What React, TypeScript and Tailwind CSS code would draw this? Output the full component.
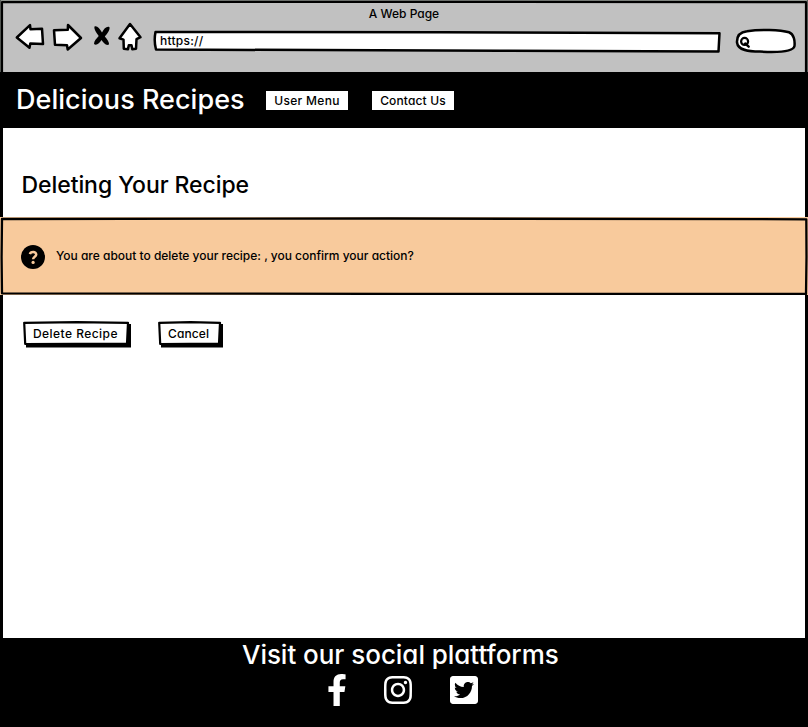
import React from "react";
import { FaFacebookF, FaInstagram, FaTwitterSquare } from "react-icons/fa";

function BrowserBar() {
  return (
    <header className="relative h-[72px] w-full shrink-0 bg-[#c1c1c1]">
      <svg className="absolute inset-0" width="808" height="72" viewBox="0 0 808 72" fill="none" stroke="#000" strokeWidth="2.5" strokeLinejoin="round" strokeLinecap="round">
        <path d="M0 0H808" stroke="#7d837d" strokeWidth="1.6" />
        <path d="M0 0V72M808 0V72" stroke="#5a5e5a" strokeWidth="2" />
        <path d="M2 72V2.2L400 1.8L806 2.2V72" strokeWidth="2.2" />
        <g fill="#fff">
          <path d="M16.8 37.5L30 25.2L30.5 29.3L42 28.7L43 44L30.3 43.6L29.5 47.8Z" />
          <path d="M54 30.2L67.8 29.8L68 25L81 38L67.7 49.5L67 45.2L55 44.8Z" />
          <path d="M130 24L140.5 37.2L136.5 39.2L136 48.8L132.3 49.2L131.5 45.3H128.8L128 49.2L123.8 48.7L123.5 39.6L119.5 38.3Z" />
          <path d="M155.5 32L440 32.2L719.5 33.2L718.5 51.5L500 50.8L156 49.5C154.5 44 154.3 38 155.5 32Z" />
          <path d="M747 31.2C760 29.2 780 29.5 789 32.3C794 34 795 41 794.5 46C793 52.8 772 52.3 760 51.6C749 51.6 738 50.5 737 42.5C736.7 36 740 32 747 31.2Z" />
        </g>
        <g fill="#000" stroke="none">
          <path d="M94.5 26.5C97 25.5 99.5 28 102 32.5C104 28.5 107 25.8 109.5 27.2C110.2 30 107 34 104.8 36.4C107.5 39.5 109.5 42.5 109 44.5C106 46 103.5 43 101.5 40C99.5 43 96.5 46 94 44C94 41 96.5 38.5 98.7 36C96 32 93.8 29 94.5 26.5Z" />
        </g>
        <circle cx="744.6" cy="41.4" r="3.5" strokeWidth="2.2" />
        <path d="M745.2 43.5L748.7 46.7" strokeWidth="2.4" />
      </svg>
      <div className="relative flex h-7 justify-center pt-[5px] text-[12px] font-medium leading-[18px]">
        <span>A Web Page</span>
      </div>
      <div className="relative pl-[160px] pt-[4px] text-[12px] font-medium leading-[18px] tracking-[0.25px]">https://</div>
    </header>
  );
}

function NavButton({ children, className }: { children: React.ReactNode; className: string }) {
  return (
    <button className={`h-[19px] w-[82px] bg-white text-[12px] font-medium leading-[19px] whitespace-nowrap text-black ${className}`}>{children}</button>
  );
}

function SketchButton({ children, width, className }: { children: React.ReactNode; width: number; className: string }) {
  return (
    <button className="relative h-[27px] whitespace-nowrap text-[12px] font-medium" style={{ width }}>
      <svg className="absolute inset-0" width={width} height="27" strokeLinejoin="round">
        <path d={`M3 23V26.5H${width}V3H${width - 4}Z`} />
        <path d={`M1.2 1.8L${width / 2} 1.2L${width - 3} 1.8L${width - 4} 22.6L2.2 23Z`} fill="#fff" stroke="#000" strokeWidth="2.2" />
      </svg>
      <span className={`relative block pb-[2px] pl-[10px] text-left leading-[24px] ${className}`}>{children}</span>
    </button>
  );
}

export default function App() {
  return (
    <div className="flex h-[727px] w-[808px] flex-col overflow-hidden bg-white font-[Inter,sans-serif] text-black [font-feature-settings:'cv11','calt'_0,'liga'_0]">
      <BrowserBar />
      <nav className="flex h-14 shrink-0 items-center bg-black">
        <h1 className="ml-[16px] w-[250px] whitespace-nowrap text-[27px] leading-[54px] font-medium tracking-[0.03px] text-white">Delicious Recipes</h1>
        <NavButton className="tracking-[0.3px]">User Menu</NavButton>
        <NavButton className="ml-6 tracking-[0.15px]">Contact Us</NavButton>
      </nav>
      <main className="flex grow flex-col">
        <section className="h-[89px] shrink-0 border-x-3 border-black pl-[18.5px] pt-[41px]">
          <h2 className="whitespace-nowrap text-[23px] leading-8 font-medium tracking-[-0.07px]">Deleting Your Recipe</h2>
        </section>
        <section className="relative flex h-[78px] shrink-0 items-center bg-[#f8ca9c] pl-[21px]">
          <svg className="absolute inset-0" width="808" height="78" fill="none" stroke="#000" strokeWidth="2.3" strokeLinejoin="round">
            <path d="M2 2L390 1.5L806.3 2.3L806.5 40L806 77L400 76.9L2 76.3L1.6 40Z" />
          </svg>
          <svg className="relative top-px" width="24" height="24" viewBox="0 0 24 24">
            <circle cx="12" cy="12" r="12" />
            <path d="M8.9 9.1C9.5 6.5 15.4 6.2 15.2 9.6C15.1 11.9 12.2 11.7 12.1 14.3" fill="none" stroke="#f8ca9c" strokeWidth="2.5" />
            <circle cx="12.1" cy="17.4" r="1.6" fill="#f8ca9c" />
          </svg>
          <p className="relative ml-[11px] whitespace-nowrap text-[12px] font-medium tracking-[-0.01px]">You are about to delete your recipe: , you confirm your action?</p>
        </section>
        <section className="grow border-x-3 border-black pl-5 pt-[26px]">
          <div className="flex gap-[27px]">
            <SketchButton width={108} className="tracking-[0.45px]">Delete Recipe</SketchButton>
            <SketchButton width={65} className="tracking-[0.1px]">Cancel</SketchButton>
          </div>
        </section>
      </main>
      <footer className="h-[89px] shrink-0 bg-black text-white">
        <p className="pl-[242px] whitespace-nowrap text-[26px] leading-[34px] font-medium tracking-[-0.04px]">Visit our social plattforms</p>
        <div className="flex pl-[321px] pt-[2px]">
          <FaFacebookF size={32} />
          <FaInstagram size={32} className="ml-[29px]" />
          <FaTwitterSquare size={32} className="ml-[34px]" />
        </div>
      </footer>
    </div>
  );
}
